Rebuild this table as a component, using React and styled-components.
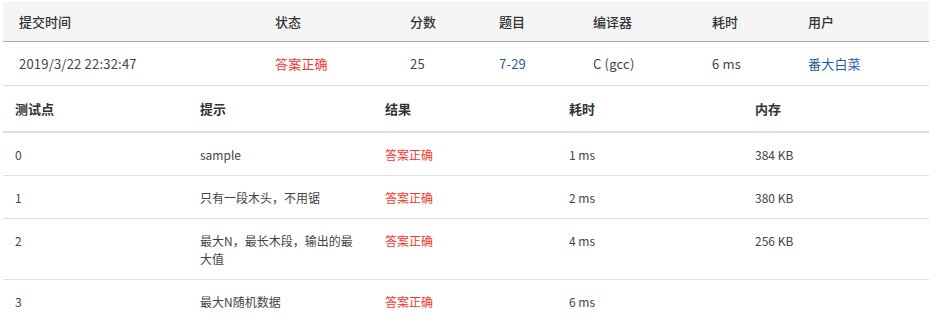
import React from 'react';
import styled, { createGlobalStyle } from 'styled-components';

const GlobalStyle = createGlobalStyle`
  html, body {
    margin: 0;
    padding: 0;
    background: #fff;
  }
  body {
    font-family: "Noto Sans CJK SC", "Noto Sans", sans-serif;
    color: #333;
  }
`;

const Page = styled.div`
  padding: 2px 8px 0 3px;
  width: 926px;
`;

const Table = styled.table`
  width: 926px;
  border-collapse: collapse;
  table-layout: fixed;
`;

const HeadCell = styled.th`
  height: 39px;
  padding: 0 0 0 16px;
  background: #f5f5f5;
  border-bottom: 1px solid #aaa;
  text-align: left;
  font-size: 13px;
  font-weight: 500;
  color: #333;
`;

const Cell = styled.td`
  height: 43px;
  padding: 0 0 0 16px;
  border-bottom: 1px solid #ddd;
  font-size: 13px;
  letter-spacing: 0.2px;
  color: ${(p) => (p.$tone === 'ok' ? '#f5352f' : p.$tone === 'link' ? '#235ca8' : '#444')};
`;

const CaseHead = styled.th`
  height: 45px;
  padding: 0 12px;
  border-bottom: 2px solid #dde2e8;
  text-align: left;
  font-size: 13px;
  font-weight: 700;
  color: #333;
`;

const CaseRow = styled.tr`
  &:last-child td {
    border-bottom: none;
  }
`;

const CaseCell = styled.td`
  padding: 13px 12px 11px;
  line-height: 18px;
  vertical-align: top;
  border-bottom: 1px solid #e0e0e0;
  font-size: 12px;
  color: ${(p) => (p.$ok ? '#f5352f' : '#444')};
`;

const summaryCols = [256, 135, 89, 94, 119, 96, 137];
const caseCols = [185, 185, 184, 186, 186];

const cases = [
  { id: 0, hint: 'sample', time: '1 ms', mem: '384 KB' },
  { id: 1, hint: '只有一段木头，不用锯', time: '2 ms', mem: '380 KB' },
  { id: 2, hint: '最大N，最长木段，输出的最大值', time: '4 ms', mem: '256 KB' },
  { id: 3, hint: '最大N随机数据', time: '6 ms', mem: '' },
];

const App = () => {
  return (
    <Page>
      <GlobalStyle />
      <Table>
        <colgroup>
          {summaryCols.map((w, i) => <col key={i} style={{ width: w }} />)}
        </colgroup>
        <thead>
          <tr>
            <HeadCell>提交时间</HeadCell>
            <HeadCell>状态</HeadCell>
            <HeadCell>分数</HeadCell>
            <HeadCell>题目</HeadCell>
            <HeadCell>编译器</HeadCell>
            <HeadCell>耗时</HeadCell>
            <HeadCell>用户</HeadCell>
          </tr>
        </thead>
        <tbody>
          <tr>
            <Cell>2019/3/22 22:32:47</Cell>
            <Cell $tone="ok">答案正确</Cell>
            <Cell>25</Cell>
            <Cell $tone="link">7-29</Cell>
            <Cell>C (gcc)</Cell>
            <Cell>6 ms</Cell>
            <Cell $tone="link">番大白菜</Cell>
          </tr>
        </tbody>
      </Table>
      <Table>
        <colgroup>
          {caseCols.map((w, i) => <col key={i} style={{ width: w }} />)}
        </colgroup>
        <thead>
          <tr>
            <CaseHead>测试点</CaseHead>
            <CaseHead>提示</CaseHead>
            <CaseHead>结果</CaseHead>
            <CaseHead>耗时</CaseHead>
            <CaseHead>内存</CaseHead>
          </tr>
        </thead>
        <tbody>
          {cases.map((c) => (
            <CaseRow key={c.id}>
              <CaseCell>{c.id}</CaseCell>
              <CaseCell>{c.hint}</CaseCell>
              <CaseCell $ok>答案正确</CaseCell>
              <CaseCell>{c.time}</CaseCell>
              <CaseCell>{c.mem}</CaseCell>
            </CaseRow>
          ))}
        </tbody>
      </Table>
    </Page>
  );
};

export default App;
